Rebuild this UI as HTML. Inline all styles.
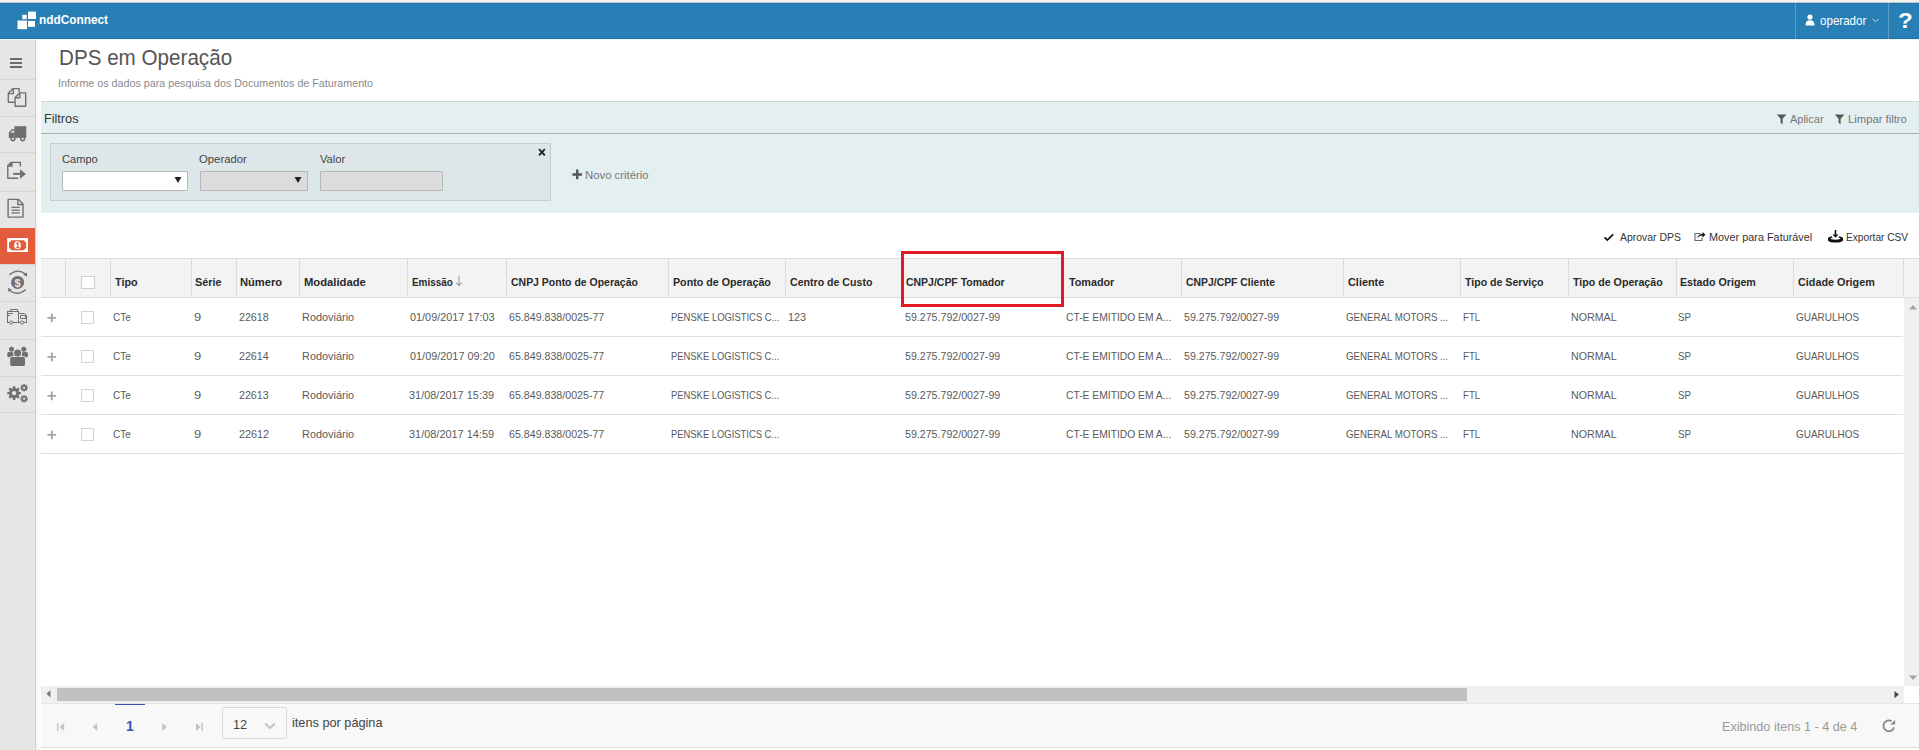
<!DOCTYPE html><html><head><meta charset="utf-8"><style>
html,body{margin:0;padding:0;width:1919px;height:750px;overflow:hidden;background:#fff;position:relative}
.t{position:absolute;white-space:nowrap;line-height:1;font-family:"Liberation Sans",sans-serif;transform-origin:0 0;display:inline-block}
</style></head><body>
<div style="position:absolute;left:0px;top:0px;width:1919px;height:2px;background:#f2f2f2"></div>
<div style="position:absolute;left:0px;top:2px;width:1919px;height:1px;background:#cdc8c5"></div>
<div style="position:absolute;left:0px;top:3px;width:1919px;height:1px;background:#1b78b4"></div>
<div style="position:absolute;left:0px;top:4px;width:1919px;height:34px;background:#287fb5"></div>
<div style="position:absolute;left:0px;top:38px;width:1919px;height:1px;background:#1873b0"></div>
<div style="position:absolute;left:0px;top:39px;width:1919px;height:1px;background:#f4f1ed"></div>
<svg style="position:absolute;left:0;top:0" width="40" height="40"><g fill="#fff"><rect x="17.5" y="20.5" width="9.5" height="8.7"/><rect x="22.3" y="14.8" width="4.4" height="4.3"/><rect x="28" y="11.6" width="8" height="7.4"/><rect x="28" y="20.9" width="7" height="6"/></g></svg>
<div style="position:absolute;left:1795px;top:3px;width:1px;height:36px;background:#5d9ec9"></div>
<div style="position:absolute;left:1888px;top:3px;width:1px;height:36px;background:#5d9ec9"></div>
<svg style="position:absolute;left:1805px;top:14px" width="11" height="12" viewBox="0 0 11 12"><circle cx="5" cy="3" r="2.6" fill="#fff"/><path d="M0.5 11.5 Q0.5 6.2 5 6.2 Q9.5 6.2 9.5 11.5 Z" fill="#fff"/></svg>
<svg style="position:absolute;left:1872px;top:18px" width="7" height="5" viewBox="0 0 7 5"><path d="M0.5 0.8 L3.5 3.8 L6.5 0.8" stroke="#cfe2ef" stroke-width="1" fill="none"/></svg>
<div style="position:absolute;left:0px;top:40px;width:35px;height:710px;background:#e6e6e6"></div>
<div style="position:absolute;left:35px;top:40px;width:1px;height:710px;background:#d3d3ce"></div>
<div style="position:absolute;left:36px;top:40px;width:5px;height:710px;background:linear-gradient(90deg,#f3f3f3,#fff)"></div>
<div style="position:absolute;left:0px;top:79px;width:35px;height:1px;background:#d6d6d1"></div>
<div style="position:absolute;left:0px;top:116px;width:35px;height:1px;background:#d6d6d1"></div>
<div style="position:absolute;left:0px;top:152px;width:35px;height:1px;background:#d6d6d1"></div>
<div style="position:absolute;left:0px;top:191px;width:35px;height:1px;background:#d6d6d1"></div>
<div style="position:absolute;left:0px;top:228px;width:35px;height:1px;background:#d6d6d1"></div>
<div style="position:absolute;left:0px;top:264px;width:35px;height:1px;background:#d6d6d1"></div>
<div style="position:absolute;left:0px;top:301px;width:35px;height:1px;background:#d6d6d1"></div>
<div style="position:absolute;left:0px;top:339px;width:35px;height:1px;background:#d6d6d1"></div>
<div style="position:absolute;left:0px;top:376px;width:35px;height:1px;background:#d6d6d1"></div>
<div style="position:absolute;left:0px;top:412px;width:35px;height:1px;background:#d6d6d1"></div>
<div style="position:absolute;left:0px;top:228px;width:35px;height:36px;background:#e25b3d"></div>
<svg style="position:absolute;left:0;top:40px" width="35" height="380" viewBox="0 40 35 380">
<g fill="#6b6b6b"><rect x="10" y="58" width="12" height="2"/><rect x="10" y="62" width="12" height="2"/><rect x="10" y="66" width="12" height="2"/></g>
<g fill="none" stroke="#707070" stroke-width="1.4" stroke-linejoin="round">
<path d="M19.2 92.3 V88.6 H13 L8.3 93.3 V102.2 H14.6"/>
<path d="M13.3 88.6 V93.6 H8.3"/>
<path d="M19.6 92.9 H25.7 V106.2 H15.1 V97.6 Z"/>
<path d="M19.8 92.9 V97.8 H15.1"/>
</g>
<g fill="#707070">
<path d="M14.4 126.2 H26.3 V137.9 H14.4 Z"/>
<path d="M8.8 132.4 L12 129.1 H14.6 V137.9 H8.8 Z"/>
</g>
<path d="M10.4 132.7 L12.6 130.6 H14 V132.7 Z" fill="#e6e6e6"/>
<g fill="#707070"><circle cx="13" cy="138.8" r="2.6"/><circle cx="22.6" cy="138.8" r="2.6"/></g>
<g fill="#e6e6e6"><circle cx="13" cy="138.8" r="1.1"/><circle cx="22.6" cy="138.8" r="1.1"/></g>
<g fill="none" stroke="#707070" stroke-width="1.4">
<path d="M20.3 166.5 V162.4 H11 L7.8 165.6 V178.2 H18.2"/>
</g>
<g fill="#707070">
<path d="M7.8 166.7 L11 162.4 H12.6 V166.7 Z"/>
<rect x="13.2" y="172.9" width="7.2" height="2"/>
<path d="M20 169.3 L26 174 L20 178.7 Z"/>
</g>
<g fill="none" stroke="#707070" stroke-width="1.4" stroke-linejoin="round">
<path d="M8.1 199.4 H18.5 L23 203.9 V217.1 H8.1 Z"/>
<path d="M17.8 199.4 V204.5 H23"/>
</g>
<g fill="#707070"><rect x="11.5" y="206.7" width="8.2" height="1.3"/><rect x="11.5" y="209.5" width="8.2" height="1.3"/><rect x="11.5" y="212.3" width="8.2" height="1.3"/></g>
<rect x="7.2" y="238" width="20.8" height="14" fill="#fff"/>
<path d="M9 242.2 A2 2 0 0 0 11 240.2 H24.2 A2 2 0 0 0 26.2 242.2 V248.3 A2 2 0 0 0 24.2 250.3 H11 A2 2 0 0 0 9 248.3 Z" fill="#e25b3d"/>
<ellipse cx="17.5" cy="245.2" rx="3.3" ry="3.9" fill="#fff"/>
<path d="M16.2 243.9 L17.9 242.7 V247.6 M16.2 247.6 H19.4" stroke="#e25b3d" stroke-width="1.2" fill="none"/>
<g fill="#707070"><circle cx="17.6" cy="282.4" r="6.5"/></g>
<text x="17.6" y="286.8" font-family="Liberation Sans" font-weight="bold" font-size="11" fill="#e6e6e6" text-anchor="middle">$</text>
<g fill="none" stroke="#707070" stroke-width="1.3">
<path d="M9.3 274.8 Q17.5 267.8 25.3 274"/>
<path d="M25.8 289.4 Q17.5 296.6 9.8 290.4"/>
</g>
<g fill="#707070"><path d="M23.2 274.8 L27 272.6 L27 276.4 Z"/><path d="M11.8 289.6 L8.1 288 L8.3 292 Z"/></g>
<g fill="none" stroke="#707070" stroke-width="1">
<rect x="7.5" y="311.5" width="11" height="11"/>
<path d="M10.5 311.5 V309.5 H17.5 V311.5"/>
<path d="M18.5 313.5 H24.5 L26.5 315.5 V322.5 H18.5"/>
<path d="M20.5 315.5 H25.5 V318.5 H20.5 Z"/>
<path d="M8 313.5 H13 M8 315.5 H10"/>
</g>
<g fill="#e6e6e6" stroke="#707070" stroke-width="1"><circle cx="11.2" cy="322.6" r="1.6"/><circle cx="22" cy="322.6" r="1.6"/></g>
<g fill="#707070">
<circle cx="11.5" cy="349.3" r="2.5"/><circle cx="23.8" cy="349.3" r="2.5"/>
<rect x="7.3" y="352" width="6.2" height="5.3" rx="1.6"/>
<rect x="21.8" y="352" width="6.2" height="5.3" rx="1.6"/>
</g>
<g fill="#e6e6e6"><circle cx="17.6" cy="353" r="4.3"/><rect x="9.4" y="356.3" width="16.4" height="10.4" rx="2.2"/></g>
<g fill="#707070">
<circle cx="17.6" cy="353" r="3.5"/>
<rect x="10.2" y="357.1" width="14.8" height="8.8" rx="1.6"/>
</g>
<circle cx="14.1" cy="393.1" r="5.0" fill="#707070"/><path d="M17.10 393.10 L20.90 393.10 M16.22 395.22 L18.91 397.91 M14.10 396.10 L14.10 399.90 M11.98 395.22 L9.29 397.91 M11.10 393.10 L7.30 393.10 M11.98 390.98 L9.29 388.29 M14.10 390.10 L14.10 386.30 M16.22 390.98 L18.91 388.29 " stroke="#707070" stroke-width="2.4"/><circle cx="14.1" cy="393.1" r="2.2" fill="#e6e6e6"/><circle cx="24.1" cy="387.8" r="2.8" fill="#707070"/><path d="M25.78 387.80 L27.90 387.80 M25.29 388.99 L26.79 390.49 M24.10 389.48 L24.10 391.60 M22.91 388.99 L21.41 390.49 M22.42 387.80 L20.30 387.80 M22.91 386.61 L21.41 385.11 M24.10 386.12 L24.10 384.00 M25.29 386.61 L26.79 385.11 " stroke="#707070" stroke-width="1.5"/><circle cx="24.1" cy="387.8" r="1.1" fill="#e6e6e6"/><circle cx="24.1" cy="398.7" r="2.8" fill="#707070"/><path d="M25.78 398.70 L27.90 398.70 M25.29 399.89 L26.79 401.39 M24.10 400.38 L24.10 402.50 M22.91 399.89 L21.41 401.39 M22.42 398.70 L20.30 398.70 M22.91 397.51 L21.41 396.01 M24.10 397.02 L24.10 394.90 M25.29 397.51 L26.79 396.01 " stroke="#707070" stroke-width="1.5"/><circle cx="24.1" cy="398.7" r="1.1" fill="#e6e6e6"/>
</svg>
<div style="position:absolute;left:41px;top:101px;width:1878px;height:1px;background:#d2d4d4"></div>
<div style="position:absolute;left:41px;top:102px;width:1878px;height:111px;background:#e4eff1"></div>
<div style="position:absolute;left:41px;top:133px;width:1878px;height:1px;background:#a9b1b3"></div>
<svg style="position:absolute;left:1776px;top:114px" width="12" height="12" viewBox="0 0 12 12"><path d="M0.8 0.5 H10.4 L6.6 4.8 V10.6 L4.6 8.8 V4.8 Z" fill="#555"/></svg>
<svg style="position:absolute;left:1834px;top:114px" width="12" height="12" viewBox="0 0 12 12"><path d="M0.8 0.5 H10.4 L6.6 4.8 V10.6 L4.6 8.8 V4.8 Z" fill="#555"/></svg>
<div style="position:absolute;left:50px;top:143px;width:499px;height:56px;border:1px solid #c8cccd;background:#dde7e9"></div>
<div style="position:absolute;left:62px;top:171px;width:124px;height:18px;border:1px solid #b8b8b8;background:#fff;border-radius:1px"></div>
<div style="position:absolute;left:200px;top:171px;width:106px;height:18px;border:1px solid #b8b8b8;background:#dcdcdc;border-radius:1px"></div>
<div style="position:absolute;left:320px;top:171px;width:121px;height:18px;border:1px solid #b8b8b8;background:#dcdcdc;border-radius:1px"></div>
<svg style="position:absolute;left:174px;top:176px" width="8" height="8" viewBox="0 0 8 8"><path d="M0.5 1 H7.5 L4 7 Z" fill="#222"/></svg>
<svg style="position:absolute;left:294px;top:176px" width="8" height="8" viewBox="0 0 8 8"><path d="M0.5 1 H7.5 L4 7 Z" fill="#222"/></svg>
<svg style="position:absolute;left:537.5px;top:148px" width="8" height="9" viewBox="0 0 8 9"><path d="M1 1.2 L6.8 7.4 M6.8 1.2 L1 7.4" stroke="#222" stroke-width="1.9"/></svg>
<svg style="position:absolute;left:572px;top:168.5px" width="11" height="11" viewBox="0 0 11 11"><path d="M5.2 0.5 V10.2 M0.4 5.4 H10" stroke="#555" stroke-width="2.5"/></svg>
<svg style="position:absolute;left:1603px;top:232px" width="12" height="11" viewBox="0 0 12 11"><path d="M1.6 5.4 L4.3 8.1 L10.2 2.3" stroke="#111" stroke-width="1.8" fill="none"/></svg>
<svg style="position:absolute;left:1693px;top:230px" width="13" height="13" viewBox="0 0 13 13"><path d="M7.5 3.5 H2 V10.5 H9 V7.5" stroke="#666" stroke-width="1.1" fill="none"/><path d="M4.5 8 Q5 4 9.5 4 V2 L12.5 4.8 L9.5 7.6 V5.6 Q6.3 5.6 4.5 8 Z" fill="#111"/></svg>
<svg style="position:absolute;left:1827px;top:229px" width="17" height="15" viewBox="0 0 17 15"><path d="M8.5 1 V7" stroke="#111" stroke-width="1.6"/><path d="M5.5 5.5 H11.5 L8.5 8.8 Z" fill="#111"/><path d="M4.8 7.2 Q1 8 1 9.4 V11.4 Q3 13.6 8.5 13.6 Q14 13.6 16 11.4 V9.4 Q16 8 12.2 7.2 L11.2 8.4 Q13.4 8.9 13.4 9.6 Q13.4 10.7 8.5 10.7 Q3.6 10.7 3.6 9.6 Q3.6 8.9 5.8 8.4 Z" fill="#111"/></svg>
<div style="position:absolute;left:41px;top:258px;width:1878px;height:1px;background:#dcdcdc"></div>
<div style="position:absolute;left:41px;top:259px;width:1878px;height:38px;background:#f3f3f3"></div>
<div style="position:absolute;left:41px;top:297px;width:1878px;height:1px;background:#dcdcdc"></div>
<div style="position:absolute;left:65px;top:259px;width:1px;height:38px;background:#dcdcdc"></div>
<div style="position:absolute;left:110px;top:259px;width:1px;height:38px;background:#dcdcdc"></div>
<div style="position:absolute;left:191px;top:259px;width:1px;height:38px;background:#dcdcdc"></div>
<div style="position:absolute;left:236px;top:259px;width:1px;height:38px;background:#dcdcdc"></div>
<div style="position:absolute;left:299px;top:259px;width:1px;height:38px;background:#dcdcdc"></div>
<div style="position:absolute;left:407px;top:259px;width:1px;height:38px;background:#dcdcdc"></div>
<div style="position:absolute;left:506px;top:259px;width:1px;height:38px;background:#dcdcdc"></div>
<div style="position:absolute;left:668px;top:259px;width:1px;height:38px;background:#dcdcdc"></div>
<div style="position:absolute;left:785px;top:259px;width:1px;height:38px;background:#dcdcdc"></div>
<div style="position:absolute;left:902px;top:259px;width:1px;height:38px;background:#dcdcdc"></div>
<div style="position:absolute;left:1062px;top:259px;width:1px;height:38px;background:#dcdcdc"></div>
<div style="position:absolute;left:1181px;top:259px;width:1px;height:38px;background:#dcdcdc"></div>
<div style="position:absolute;left:1343px;top:259px;width:1px;height:38px;background:#dcdcdc"></div>
<div style="position:absolute;left:1460px;top:259px;width:1px;height:38px;background:#dcdcdc"></div>
<div style="position:absolute;left:1568px;top:259px;width:1px;height:38px;background:#dcdcdc"></div>
<div style="position:absolute;left:1676px;top:259px;width:1px;height:38px;background:#dcdcdc"></div>
<div style="position:absolute;left:1793px;top:259px;width:1px;height:38px;background:#dcdcdc"></div>
<div style="position:absolute;left:1903px;top:259px;width:1px;height:38px;background:#dcdcdc"></div>
<div style="position:absolute;left:81px;top:276px;width:12px;height:11px;border:1px solid #cfcfcf;background:#fff"></div>
<svg style="position:absolute;left:455px;top:275px" width="8" height="12" viewBox="0 0 8 12"><path d="M4 0.5 V10.5 M1.2 7.6 L4 10.6 L6.8 7.6" stroke="#a0a0a0" stroke-width="1.1" fill="none"/></svg>
<div style="position:absolute;left:41px;top:336px;width:1862px;height:1px;background:#dedede"></div>
<svg style="position:absolute;left:47px;top:313px" width="10" height="10" viewBox="0 0 10 10"><path d="M4.8 0.5 V9.3 M0.4 4.9 H9.2" stroke="#a4a4a4" stroke-width="1.9"/></svg>
<div style="position:absolute;left:81px;top:311px;width:11px;height:11px;border:1px solid #d4d4d4;background:#fff"></div>
<div style="position:absolute;left:41px;top:375px;width:1862px;height:1px;background:#dedede"></div>
<svg style="position:absolute;left:47px;top:352px" width="10" height="10" viewBox="0 0 10 10"><path d="M4.8 0.5 V9.3 M0.4 4.9 H9.2" stroke="#a4a4a4" stroke-width="1.9"/></svg>
<div style="position:absolute;left:81px;top:350px;width:11px;height:11px;border:1px solid #d4d4d4;background:#fff"></div>
<div style="position:absolute;left:41px;top:414px;width:1862px;height:1px;background:#dedede"></div>
<svg style="position:absolute;left:47px;top:391px" width="10" height="10" viewBox="0 0 10 10"><path d="M4.8 0.5 V9.3 M0.4 4.9 H9.2" stroke="#a4a4a4" stroke-width="1.9"/></svg>
<div style="position:absolute;left:81px;top:389px;width:11px;height:11px;border:1px solid #d4d4d4;background:#fff"></div>
<div style="position:absolute;left:41px;top:453px;width:1862px;height:1px;background:#dedede"></div>
<svg style="position:absolute;left:47px;top:430px" width="10" height="10" viewBox="0 0 10 10"><path d="M4.8 0.5 V9.3 M0.4 4.9 H9.2" stroke="#a4a4a4" stroke-width="1.9"/></svg>
<div style="position:absolute;left:81px;top:428px;width:11px;height:11px;border:1px solid #d4d4d4;background:#fff"></div>
<div style="position:absolute;left:901px;top:251px;width:163px;height:56px;box-sizing:border-box;border:3px solid #e01b24"></div>
<div style="position:absolute;left:1904px;top:298px;width:15px;height:388px;background:#f0f0f0"></div>
<svg style="position:absolute;left:1908px;top:303px" width="10" height="8" viewBox="0 0 10 8"><path d="M1 6.5 H9 L5 2 Z" fill="#a3a3a3"/></svg>
<svg style="position:absolute;left:1908px;top:673.5px" width="10" height="8" viewBox="0 0 10 8"><path d="M1 1.5 H9 L5 6 Z" fill="#a3a3a3"/></svg>
<div style="position:absolute;left:41px;top:686px;width:1863px;height:17px;background:#f0f0f0"></div>
<div style="position:absolute;left:57px;top:688px;width:1410px;height:13px;background:#c1c1c1"></div>
<svg style="position:absolute;left:44px;top:689px" width="8" height="10" viewBox="0 0 8 10"><path d="M6.5 1.2 V8.4 L2.3 4.8 Z" fill="#7a7a7a"/></svg>
<svg style="position:absolute;left:1892.5px;top:690px" width="8" height="10" viewBox="0 0 8 10"><path d="M1.5 1 V8.2 L5.8 4.6 Z" fill="#444"/></svg>
<div style="position:absolute;left:1904px;top:686px;width:15px;height:17px;background:#fff"></div>
<div style="position:absolute;left:41px;top:703px;width:1878px;height:1px;background:#e6e6e6"></div>
<div style="position:absolute;left:41px;top:704px;width:1878px;height:43px;background:#f8f8f8"></div>
<div style="position:absolute;left:41px;top:747px;width:1878px;height:1px;background:#dcdcdc"></div>
<div style="position:absolute;left:115px;top:704px;width:30px;height:1px;background:#3f51b5"></div>
<svg style="position:absolute;left:55px;top:720px" width="160" height="14" viewBox="55 720 160 14">
<g fill="#c4c4c4">
<rect x="57" y="723" width="1.5" height="8"/><path d="M64.2 723 V731 L59.5 727 Z"/>
<path d="M97.2 723 V731 L92.6 727 Z"/>
<path d="M162.2 723 V731 L166.8 727 Z"/>
<path d="M196 723 V731 L200.7 727 Z"/><rect x="201.5" y="723" width="1.5" height="8"/>
</g></svg>
<div style="position:absolute;left:222px;top:707px;width:63px;height:30px;border:1px solid #d9d9d9;background:#f8f8f8;border-radius:2px"></div>
<svg style="position:absolute;left:264px;top:722px" width="12" height="8" viewBox="0 0 12 8"><path d="M1.2 1.6 L6 6 L10.8 1.6" stroke="#c6c6c6" stroke-width="2.2" fill="none"/></svg>
<svg style="position:absolute;left:1882px;top:719px" width="15" height="15" viewBox="0 0 15 15"><path d="M12.1 8.2 A5.4 5.4 0 1 1 9.6 2.1" stroke="#8a8a8a" stroke-width="1.8" fill="none"/><path d="M8.2 5.6 L13.1 5.6 L13.1 0.9 Z" fill="#8a8a8a"/></svg>
<span class=t id=t0 style="left:38.69px;top:13.60px;font-size:12px;color:#fff;font-weight:bold;transform:scaleX(0.9857);">nddConnect</span>
<span class=t id=t1 style="left:1819.82px;top:14.00px;font-size:13px;color:#fff;font-weight:normal;transform:scaleX(0.8909);">operador</span>
<span class=t id=t2 style="left:1897.88px;top:9.80px;font-size:22px;color:#fff;font-weight:bold;transform:scaleX(1.0997);">?</span>
<span class=t id=t3 style="left:58.54px;top:46.90px;font-size:22px;color:#555;font-weight:normal;transform:scaleX(0.9376);">DPS em Operação</span>
<span class=t id=t4 style="left:58.18px;top:78.10px;font-size:11.5px;color:#8a8a8a;font-weight:normal;transform:scaleX(0.9316);">Informe os dados para pesquisa dos Documentos de Faturamento</span>
<span class=t id=t5 style="left:43.90px;top:112.40px;font-size:13px;color:#333;font-weight:normal;transform:scaleX(0.9737);">Filtros</span>
<span class=t id=t6 style="left:1790.04px;top:114.00px;font-size:11px;color:#777;font-weight:normal;transform:scaleX(0.9983);">Aplicar</span>
<span class=t id=t7 style="left:1847.72px;top:114.00px;font-size:11px;color:#777;font-weight:normal;transform:scaleX(1.0242);">Limpar filtro</span>
<span class=t id=t8 style="left:61.65px;top:154.30px;font-size:11px;color:#444;font-weight:normal;transform:scaleX(1.0092);">Campo</span>
<span class=t id=t9 style="left:199.09px;top:154.30px;font-size:11px;color:#444;font-weight:normal;transform:scaleX(1.0285);">Operador</span>
<span class=t id=t10 style="left:319.58px;top:154.30px;font-size:11px;color:#444;font-weight:normal;transform:scaleX(1.0113);">Valor</span>
<span class=t id=t11 style="left:584.64px;top:170.00px;font-size:11px;color:#777;font-weight:normal;transform:scaleX(1.0306);">Novo critério</span>
<span class=t id=t12 style="left:1619.98px;top:232.00px;font-size:10.5px;color:#333;font-weight:normal;transform:scaleX(0.9945);">Aprovar DPS</span>
<span class=t id=t13 style="left:1709.49px;top:232.00px;font-size:10.5px;color:#333;font-weight:normal;transform:scaleX(1.0345);">Mover para Faturável</span>
<span class=t id=t14 style="left:1846.37px;top:232.00px;font-size:10.5px;color:#333;font-weight:normal;transform:scaleX(0.9680);">Exportar CSV</span>
<span class=t id=t15 style="left:115.21px;top:277.00px;font-size:11.5px;color:#2a2a2a;font-weight:bold;transform:scaleX(0.9388);">Tipo</span>
<span class=t id=t16 style="left:195.23px;top:277.00px;font-size:11.5px;color:#2a2a2a;font-weight:bold;transform:scaleX(0.9378);">Série</span>
<span class=t id=t17 style="left:240.42px;top:277.00px;font-size:11.5px;color:#2a2a2a;font-weight:bold;transform:scaleX(0.9694);">Número</span>
<span class=t id=t18 style="left:303.81px;top:277.00px;font-size:11.5px;color:#2a2a2a;font-weight:bold;transform:scaleX(0.9774);">Modalidade</span>
<span class=t id=t19 style="left:411.68px;top:277.00px;font-size:11.5px;color:#2a2a2a;font-weight:bold;transform:scaleX(0.8613);">Emissão</span>
<span class=t id=t20 style="left:510.60px;top:277.00px;font-size:11.5px;color:#2a2a2a;font-weight:bold;transform:scaleX(0.9108);">CNPJ Ponto de Operação</span>
<span class=t id=t21 style="left:672.90px;top:277.00px;font-size:11.5px;color:#2a2a2a;font-weight:bold;transform:scaleX(0.9283);">Ponto de Operação</span>
<span class=t id=t22 style="left:789.62px;top:277.00px;font-size:11.5px;color:#2a2a2a;font-weight:bold;transform:scaleX(0.9210);">Centro de Custo</span>
<span class=t id=t23 style="left:906.02px;top:277.00px;font-size:11.5px;color:#2a2a2a;font-weight:bold;transform:scaleX(0.9100);">CNPJ/CPF Tomador</span>
<span class=t id=t24 style="left:1069.21px;top:277.00px;font-size:11.5px;color:#2a2a2a;font-weight:bold;transform:scaleX(0.9373);">Tomador</span>
<span class=t id=t25 style="left:1185.96px;top:277.00px;font-size:11.5px;color:#2a2a2a;font-weight:bold;transform:scaleX(0.9044);">CNPJ/CPF Cliente</span>
<span class=t id=t26 style="left:1347.53px;top:277.00px;font-size:11.5px;color:#2a2a2a;font-weight:bold;transform:scaleX(0.9460);">Cliente</span>
<span class=t id=t27 style="left:1464.62px;top:277.00px;font-size:11.5px;color:#2a2a2a;font-weight:bold;transform:scaleX(0.9193);">Tipo de Serviço</span>
<span class=t id=t28 style="left:1573.18px;top:277.00px;font-size:11.5px;color:#2a2a2a;font-weight:bold;transform:scaleX(0.9254);">Tipo de Operação</span>
<span class=t id=t29 style="left:1680.28px;top:277.00px;font-size:11.5px;color:#2a2a2a;font-weight:bold;transform:scaleX(0.9271);">Estado Origem</span>
<span class=t id=t30 style="left:1797.58px;top:277.00px;font-size:11.5px;color:#2a2a2a;font-weight:bold;transform:scaleX(0.9390);">Cidade Origem</span>
<span class=t id=t31 style="left:113.07px;top:312.30px;font-size:11px;color:#5a5a5a;font-weight:normal;transform:scaleX(0.9111);">CTe</span>
<span class=t id=t32 style="left:193.78px;top:312.30px;font-size:11px;color:#5a5a5a;font-weight:normal;transform:scaleX(1.1792);">9</span>
<span class=t id=t33 style="left:238.90px;top:312.30px;font-size:11px;color:#5a5a5a;font-weight:normal;transform:scaleX(0.9694);">22618</span>
<span class=t id=t34 style="left:301.70px;top:312.30px;font-size:11px;color:#5a5a5a;font-weight:normal;transform:scaleX(0.9925);">Rodoviário</span>
<span class=t id=t35 style="left:410.02px;top:312.30px;font-size:11px;color:#5a5a5a;font-weight:normal;transform:scaleX(0.9885);">01/09/2017 17:03</span>
<span class=t id=t36 style="left:509.18px;top:312.30px;font-size:11px;color:#5a5a5a;font-weight:normal;transform:scaleX(0.9673);">65.849.838/0025-77</span>
<span class=t id=t37 style="left:670.94px;top:312.30px;font-size:11px;color:#5a5a5a;font-weight:normal;transform:scaleX(0.8574);">PENSKE LOGISTICS C...</span>
<span class=t id=t38 style="left:787.62px;top:312.30px;font-size:11px;color:#5a5a5a;font-weight:normal;transform:scaleX(0.9898);">123</span>
<span class=t id=t39 style="left:904.57px;top:312.30px;font-size:11px;color:#5a5a5a;font-weight:normal;transform:scaleX(0.9670);">59.275.792/0027-99</span>
<span class=t id=t40 style="left:1066.13px;top:312.30px;font-size:11px;color:#5a5a5a;font-weight:normal;transform:scaleX(0.9363);">CT-E EMITIDO EM A...</span>
<span class=t id=t41 style="left:1183.98px;top:312.30px;font-size:11px;color:#5a5a5a;font-weight:normal;transform:scaleX(0.9667);">59.275.792/0027-99</span>
<span class=t id=t42 style="left:1346.14px;top:312.30px;font-size:11px;color:#5a5a5a;font-weight:normal;transform:scaleX(0.8849);">GENERAL MOTORS ...</span>
<span class=t id=t43 style="left:1463.23px;top:312.30px;font-size:11px;color:#5a5a5a;font-weight:normal;transform:scaleX(0.8753);">FTL</span>
<span class=t id=t44 style="left:1571.13px;top:312.30px;font-size:11px;color:#5a5a5a;font-weight:normal;transform:scaleX(0.9687);">NORMAL</span>
<span class=t id=t45 style="left:1678.36px;top:312.30px;font-size:11px;color:#5a5a5a;font-weight:normal;transform:scaleX(0.8942);">SP</span>
<span class=t id=t46 style="left:1796.23px;top:312.30px;font-size:11px;color:#5a5a5a;font-weight:normal;transform:scaleX(0.9043);">GUARULHOS</span>
<span class=t id=t47 style="left:113.07px;top:351.30px;font-size:11px;color:#5a5a5a;font-weight:normal;transform:scaleX(0.9111);">CTe</span>
<span class=t id=t48 style="left:193.78px;top:351.30px;font-size:11px;color:#5a5a5a;font-weight:normal;transform:scaleX(1.1792);">9</span>
<span class=t id=t49 style="left:238.97px;top:351.30px;font-size:11px;color:#5a5a5a;font-weight:normal;transform:scaleX(0.9695);">22614</span>
<span class=t id=t50 style="left:301.70px;top:351.30px;font-size:11px;color:#5a5a5a;font-weight:normal;transform:scaleX(0.9925);">Rodoviário</span>
<span class=t id=t51 style="left:410.02px;top:351.30px;font-size:11px;color:#5a5a5a;font-weight:normal;transform:scaleX(0.9895);">01/09/2017 09:20</span>
<span class=t id=t52 style="left:509.18px;top:351.30px;font-size:11px;color:#5a5a5a;font-weight:normal;transform:scaleX(0.9673);">65.849.838/0025-77</span>
<span class=t id=t53 style="left:670.92px;top:351.30px;font-size:11px;color:#5a5a5a;font-weight:normal;transform:scaleX(0.8550);">PENSKE LOGISTICS C...</span>
<span class=t id=t54 style="left:904.57px;top:351.30px;font-size:11px;color:#5a5a5a;font-weight:normal;transform:scaleX(0.9670);">59.275.792/0027-99</span>
<span class=t id=t55 style="left:1066.13px;top:351.30px;font-size:11px;color:#5a5a5a;font-weight:normal;transform:scaleX(0.9363);">CT-E EMITIDO EM A...</span>
<span class=t id=t56 style="left:1183.98px;top:351.30px;font-size:11px;color:#5a5a5a;font-weight:normal;transform:scaleX(0.9667);">59.275.792/0027-99</span>
<span class=t id=t57 style="left:1346.14px;top:351.30px;font-size:11px;color:#5a5a5a;font-weight:normal;transform:scaleX(0.8849);">GENERAL MOTORS ...</span>
<span class=t id=t58 style="left:1463.23px;top:351.30px;font-size:11px;color:#5a5a5a;font-weight:normal;transform:scaleX(0.8753);">FTL</span>
<span class=t id=t59 style="left:1571.13px;top:351.30px;font-size:11px;color:#5a5a5a;font-weight:normal;transform:scaleX(0.9687);">NORMAL</span>
<span class=t id=t60 style="left:1678.36px;top:351.30px;font-size:11px;color:#5a5a5a;font-weight:normal;transform:scaleX(0.8942);">SP</span>
<span class=t id=t61 style="left:1796.23px;top:351.30px;font-size:11px;color:#5a5a5a;font-weight:normal;transform:scaleX(0.9043);">GUARULHOS</span>
<span class=t id=t62 style="left:113.07px;top:390.30px;font-size:11px;color:#5a5a5a;font-weight:normal;transform:scaleX(0.9111);">CTe</span>
<span class=t id=t63 style="left:193.78px;top:390.30px;font-size:11px;color:#5a5a5a;font-weight:normal;transform:scaleX(1.1792);">9</span>
<span class=t id=t64 style="left:238.96px;top:390.30px;font-size:11px;color:#5a5a5a;font-weight:normal;transform:scaleX(0.9700);">22613</span>
<span class=t id=t65 style="left:301.70px;top:390.30px;font-size:11px;color:#5a5a5a;font-weight:normal;transform:scaleX(0.9925);">Rodoviário</span>
<span class=t id=t66 style="left:409.42px;top:390.30px;font-size:11px;color:#5a5a5a;font-weight:normal;transform:scaleX(0.9934);">31/08/2017 15:39</span>
<span class=t id=t67 style="left:509.18px;top:390.30px;font-size:11px;color:#5a5a5a;font-weight:normal;transform:scaleX(0.9673);">65.849.838/0025-77</span>
<span class=t id=t68 style="left:670.92px;top:390.30px;font-size:11px;color:#5a5a5a;font-weight:normal;transform:scaleX(0.8550);">PENSKE LOGISTICS C...</span>
<span class=t id=t69 style="left:904.57px;top:390.30px;font-size:11px;color:#5a5a5a;font-weight:normal;transform:scaleX(0.9670);">59.275.792/0027-99</span>
<span class=t id=t70 style="left:1066.13px;top:390.30px;font-size:11px;color:#5a5a5a;font-weight:normal;transform:scaleX(0.9363);">CT-E EMITIDO EM A...</span>
<span class=t id=t71 style="left:1183.98px;top:390.30px;font-size:11px;color:#5a5a5a;font-weight:normal;transform:scaleX(0.9667);">59.275.792/0027-99</span>
<span class=t id=t72 style="left:1346.14px;top:390.30px;font-size:11px;color:#5a5a5a;font-weight:normal;transform:scaleX(0.8849);">GENERAL MOTORS ...</span>
<span class=t id=t73 style="left:1463.23px;top:390.30px;font-size:11px;color:#5a5a5a;font-weight:normal;transform:scaleX(0.8753);">FTL</span>
<span class=t id=t74 style="left:1571.13px;top:390.30px;font-size:11px;color:#5a5a5a;font-weight:normal;transform:scaleX(0.9687);">NORMAL</span>
<span class=t id=t75 style="left:1678.36px;top:390.30px;font-size:11px;color:#5a5a5a;font-weight:normal;transform:scaleX(0.8942);">SP</span>
<span class=t id=t76 style="left:1796.23px;top:390.30px;font-size:11px;color:#5a5a5a;font-weight:normal;transform:scaleX(0.9043);">GUARULHOS</span>
<span class=t id=t77 style="left:113.07px;top:429.30px;font-size:11px;color:#5a5a5a;font-weight:normal;transform:scaleX(0.9111);">CTe</span>
<span class=t id=t78 style="left:193.78px;top:429.30px;font-size:11px;color:#5a5a5a;font-weight:normal;transform:scaleX(1.1792);">9</span>
<span class=t id=t79 style="left:238.76px;top:429.30px;font-size:11px;color:#5a5a5a;font-weight:normal;transform:scaleX(0.9843);">22612</span>
<span class=t id=t80 style="left:301.70px;top:429.30px;font-size:11px;color:#5a5a5a;font-weight:normal;transform:scaleX(0.9925);">Rodoviário</span>
<span class=t id=t81 style="left:409.42px;top:429.30px;font-size:11px;color:#5a5a5a;font-weight:normal;transform:scaleX(0.9934);">31/08/2017 14:59</span>
<span class=t id=t82 style="left:509.18px;top:429.30px;font-size:11px;color:#5a5a5a;font-weight:normal;transform:scaleX(0.9673);">65.849.838/0025-77</span>
<span class=t id=t83 style="left:670.92px;top:429.30px;font-size:11px;color:#5a5a5a;font-weight:normal;transform:scaleX(0.8550);">PENSKE LOGISTICS C...</span>
<span class=t id=t84 style="left:904.57px;top:429.30px;font-size:11px;color:#5a5a5a;font-weight:normal;transform:scaleX(0.9670);">59.275.792/0027-99</span>
<span class=t id=t85 style="left:1066.13px;top:429.30px;font-size:11px;color:#5a5a5a;font-weight:normal;transform:scaleX(0.9363);">CT-E EMITIDO EM A...</span>
<span class=t id=t86 style="left:1183.98px;top:429.30px;font-size:11px;color:#5a5a5a;font-weight:normal;transform:scaleX(0.9667);">59.275.792/0027-99</span>
<span class=t id=t87 style="left:1346.14px;top:429.30px;font-size:11px;color:#5a5a5a;font-weight:normal;transform:scaleX(0.8849);">GENERAL MOTORS ...</span>
<span class=t id=t88 style="left:1463.23px;top:429.30px;font-size:11px;color:#5a5a5a;font-weight:normal;transform:scaleX(0.8753);">FTL</span>
<span class=t id=t89 style="left:1571.13px;top:429.30px;font-size:11px;color:#5a5a5a;font-weight:normal;transform:scaleX(0.9687);">NORMAL</span>
<span class=t id=t90 style="left:1678.36px;top:429.30px;font-size:11px;color:#5a5a5a;font-weight:normal;transform:scaleX(0.8942);">SP</span>
<span class=t id=t91 style="left:1796.23px;top:429.30px;font-size:11px;color:#5a5a5a;font-weight:normal;transform:scaleX(0.9043);">GUARULHOS</span>
<span class=t id=t92 style="left:126.44px;top:718.50px;font-size:14px;color:#3f51b5;font-weight:bold;transform:scaleX(1.0015);">1</span>
<span class=t id=t93 style="left:232.61px;top:718.00px;font-size:13px;color:#444;font-weight:normal;transform:scaleX(0.9763);">12</span>
<span class=t id=t94 style="left:291.57px;top:716.00px;font-size:13px;color:#444;font-weight:normal;transform:scaleX(0.9783);">itens por página</span>
<span class=t id=t95 style="left:1722.43px;top:719.70px;font-size:13px;color:#9a9a9a;font-weight:normal;transform:scaleX(0.9703);">Exibindo itens 1 - 4 de 4</span>
</body></html>
